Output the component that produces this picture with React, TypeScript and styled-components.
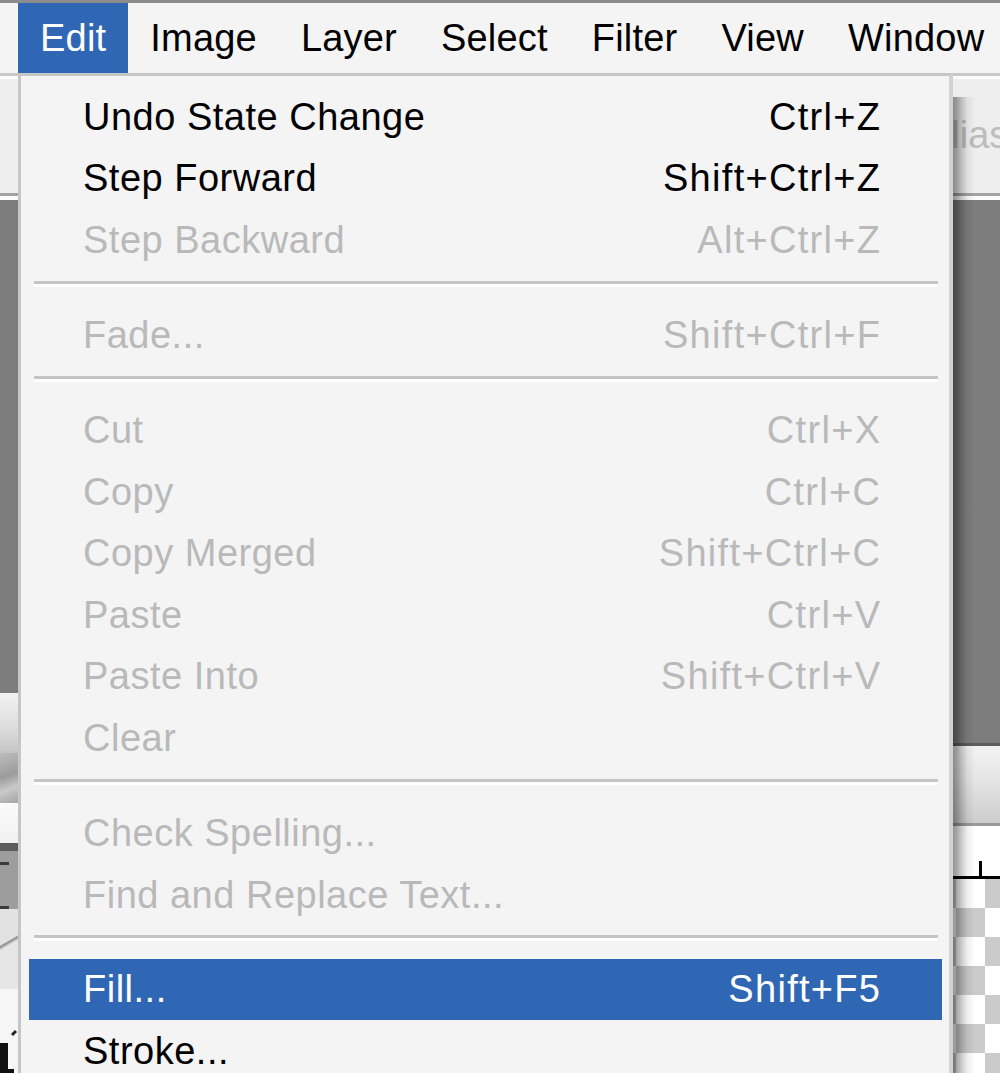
import React from 'react';
import styled, { createGlobalStyle } from 'styled-components';

const GlobalStyle = createGlobalStyle`
  html, body {
    margin: 0;
    padding: 0;
    background: #7e7e7e;
  }
`;

const Root = styled.div`
  position: relative;
  width: 1000px;
  height: 1073px;
  overflow: hidden;
  display: flex;
  flex-direction: column;
  background: #7e7e7e;
  font-family: 'Liberation Sans', Arial, sans-serif;
`;

const TopRule = styled.div`
  height: 3px;
  background: #8c8c8c;
`;

const MenuBar = styled.div`
  height: 70px;
  display: flex;
  padding-left: 18px;
  background: #f4f4f4;
`;

const MenuTitle = styled.div<{ $active?: boolean }>`
  display: flex;
  align-items: center;
  padding: 0 22px;
  font-size: 38px;
  line-height: 1;
  letter-spacing: 0.2px;
  color: ${({ $active }) => ($active ? '#fff' : '#000')};
  background: ${({ $active }) => ($active ? '#3067b5' : 'transparent')};
`;

const OptionsBar = styled.div`
  height: 117px;
  display: flex;
  align-items: center;
  background: #eeeeee;
  border-top: 3px solid #c8c8c8;
  border-bottom: 3px solid #a3a3a3;
  box-shadow: inset 0 3px 0 #fbfbfb;
`;

const Gripper = styled.div`
  width: 18px;
  align-self: stretch;
  background-image:
    linear-gradient(to right, #5a5a5a 0 7px, transparent 7px 14px, #5a5a5a 14px 18px),
    linear-gradient(to right, #444 0 7px, transparent 7px 14px, #444 14px 18px),
    linear-gradient(#eeeeee, #e4e4e4 50%, #eeeeee);
  background-size: 18px 3px, 18px 3px, 18px 48px;
  background-position: 0 34px, 0 82px, 0 37px;
  background-repeat: no-repeat;
`;

const OptionLabel = styled.span`
  margin-left: 852px;
  font-size: 38px;
  line-height: 1;
  white-space: nowrap;
  color: #bdbdbd;
`;

const Body = styled.div`
  flex: 1;
  display: flex;
  border-top: 4px solid #fafafa;
`;

const ToolDock = styled.div`
  width: 18px;
  display: flex;
  flex-direction: column;
`;

const Workspace = styled.div`
  flex: 1;
  background: #7e7e7e;
`;

const DocWindow = styled.div`
  width: 60px;
  display: flex;
  flex-direction: column;
`;

const DarkFill = styled.div<{ $h: number }>`
  height: ${({ $h }) => $h}px;
  flex-shrink: 0;
  background: #7d7d7d;
`;

const DockSlot = styled.div<{ $h: number; $bg: string }>`
  height: ${({ $h }) => $h}px;
  flex-shrink: 0;
  background: ${({ $bg }) => $bg};
`;

const DockIcon = styled.div`
  flex: 1;
  display: flex;
  align-items: flex-end;
  background: #f6f6f6;
`;

const DocTitle = styled.div`
  height: 77px;
  flex-shrink: 0;
  border-top: 3px solid #5e5e5e;
  border-bottom: 3px solid #9a9a9a;
  background: linear-gradient(#f3f3f3, #e6e6e6 40%, #cdcdcd);
`;

const Ruler = styled.div`
  height: 53px;
  flex-shrink: 0;
  background: #fff;
  display: flex;
`;

const Checker = styled.div`
  flex: 1;
  background: repeating-conic-gradient(#cbcbcb 0 25%, #ffffff 0 50%) 16px 0 / 58px 58px;
`;

const DropMenu = styled.div`
  position: absolute;
  left: 18px;
  top: 73px;
  width: 935px;
  height: 1020px;
  box-sizing: border-box;
  padding-top: 10px;
  background: #f4f4f4;
  border-top: 3px solid #c6c6c6;
  border-left: 3px solid #c6c6c6;
  border-right: 4px solid #d2d2d2;
  display: flex;
  flex-direction: column;

  &::after {
    content: '';
    position: absolute;
    top: 21px;
    bottom: 0;
    left: 100%;
    width: 22px;
    margin-left: 4px;
    background: linear-gradient(
      to right,
      rgba(0, 0, 0, 0.42) 0,
      rgba(0, 0, 0, 0.34) 4px,
      rgba(0, 0, 0, 0.22) 8px,
      rgba(0, 0, 0, 0.07) 14px,
      rgba(0, 0, 0, 0) 22px
    );
  }
`;

const MenuRow = styled.div<{ $active?: boolean; $disabled?: boolean }>`
  height: 61.6px;
  flex-shrink: 0;
  margin: 0 7px 0 8px;
  padding: 0 62px 0 54px;
  display: flex;
  align-items: center;
  justify-content: space-between;
  font-size: 38px;
  line-height: 1;
  white-space: nowrap;
  background: ${({ $active }) => ($active ? '#3067b5' : 'transparent')};
  color: ${({ $active, $disabled }) => ($active ? '#fff' : $disabled ? '#b9b9b9' : '#000')};
`;

const ItemLabel = styled.span`
  letter-spacing: 0.5px;
`;

const Shortcut = styled.span`
  letter-spacing: 1.3px;
  margin-right: -1.3px;
`;

const Separator = styled.div`
  height: 33.4px;
  flex-shrink: 0;
  box-sizing: border-box;
  margin: 0 11px 0 13px;
  padding-top: 10px;
  display: flex;
  flex-direction: column;

  &::before {
    content: '';
    height: 3px;
    background: #c5c5c5;
  }

  &::after {
    content: '';
    height: 3px;
    background: #ffffff;
  }
`;

type Entry =
  | { kind: 'sep' }
  | { kind: 'item'; label: string; keys?: string; disabled?: boolean; active?: boolean };

const entries: Entry[] = [
  { kind: 'item', label: 'Undo State Change', keys: 'Ctrl+Z' },
  { kind: 'item', label: 'Step Forward', keys: 'Shift+Ctrl+Z' },
  { kind: 'item', label: 'Step Backward', keys: 'Alt+Ctrl+Z', disabled: true },
  { kind: 'sep' },
  { kind: 'item', label: 'Fade...', keys: 'Shift+Ctrl+F', disabled: true },
  { kind: 'sep' },
  { kind: 'item', label: 'Cut', keys: 'Ctrl+X', disabled: true },
  { kind: 'item', label: 'Copy', keys: 'Ctrl+C', disabled: true },
  { kind: 'item', label: 'Copy Merged', keys: 'Shift+Ctrl+C', disabled: true },
  { kind: 'item', label: 'Paste', keys: 'Ctrl+V', disabled: true },
  { kind: 'item', label: 'Paste Into', keys: 'Shift+Ctrl+V', disabled: true },
  { kind: 'item', label: 'Clear', disabled: true },
  { kind: 'sep' },
  { kind: 'item', label: 'Check Spelling...', disabled: true },
  { kind: 'item', label: 'Find and Replace Text...', disabled: true },
  { kind: 'sep' },
  { kind: 'item', label: 'Fill...', keys: 'Shift+F5', active: true },
  { kind: 'item', label: 'Stroke...' },
];

const titles = ['Edit', 'Image', 'Layer', 'Select', 'Filter', 'View', 'Window'];

export default function App() {
  return (
    <Root>
      <GlobalStyle />
      <TopRule />
      <MenuBar>
        {titles.map((t) => (
          <MenuTitle key={t} $active={t === 'Edit'}>
            {t}
          </MenuTitle>
        ))}
      </MenuBar>

      <OptionsBar>
        <Gripper />
        <OptionLabel>Anti-alias</OptionLabel>
      </OptionsBar>

      <Body>
        <ToolDock>
          <DarkFill $h={493} />
          <DockSlot $h={60} $bg="linear-gradient(#f2f2f2, #dcdcdc 60%, #c4c4c4)" />
          <DockSlot $h={50} $bg="linear-gradient(160deg, #bdbdbd, #9c9c9c 45%, #c9c9c9 70%, #a5a5a5)" />
          <DockSlot $h={40} $bg="linear-gradient(#fbfbfb, #f0f0f0)" />
          <DockSlot $h={8} $bg="#5c5c5c" />
          <DockSlot
            $h={58}
            $bg="linear-gradient(#3c3c3c, #3c3c3c) 0 11px / 9px 3px no-repeat, linear-gradient(#3c3c3c, #3c3c3c) 0 55px / 9px 3px no-repeat, #9d9d9d"
          />
          <DockSlot $h={80} $bg="linear-gradient(150deg, #e2e2e2 40%, #8a8a8a 42%, #e6e6e6 46%)" />
          <DockIcon>
            <svg width="18" height="44" viewBox="0 0 18 44">
              <path d="M0 14 L8 14 L8 40 L14 40 L14 44 L0 44 Z" fill="#111" />
              <path d="M12 6 L16 2" stroke="#222" strokeWidth="3" />
            </svg>
          </DockIcon>
        </ToolDock>

        <Workspace />

        <DocWindow>
          <DarkFill $h={543} />
          <DocTitle />
          <Ruler>
            <svg width="60" height="53" viewBox="0 0 60 53">
              <rect x="0" y="50" width="60" height="3" fill="#000" />
              <rect x="39" y="35" width="3" height="16" fill="#000" />
            </svg>
          </Ruler>
          <Checker />
        </DocWindow>
      </Body>

      <DropMenu>
        {entries.map((e, i) =>
          e.kind === 'sep' ? (
            <Separator key={i} />
          ) : (
            <MenuRow key={i} $active={e.active} $disabled={e.disabled}>
              <ItemLabel>{e.label}</ItemLabel>
              {e.keys && <Shortcut>{e.keys}</Shortcut>}
            </MenuRow>
          )
        )}
      </DropMenu>
    </Root>
  );
}
